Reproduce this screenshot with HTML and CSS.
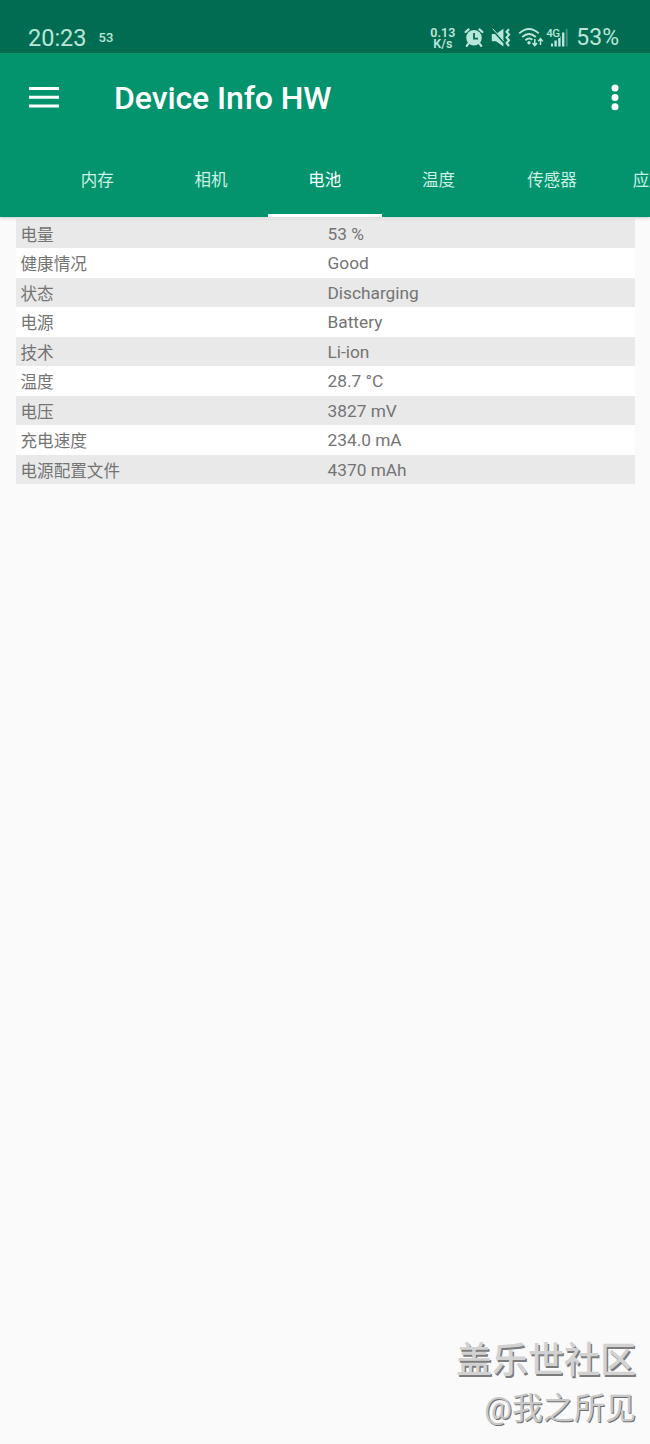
FILE: index.html
```html
<!DOCTYPE html>
<html lang="zh">
<head>
  <meta charset="UTF-8">
  <meta name="viewport" content="width=device-width, initial-scale=1.0">
  <title>Device Info HW</title>
  <link rel="stylesheet" href="styles.css">
</head>
<body>
  <div class="status-bar">
    <span class="clock">20:23</span>
    <span class="notice">53</span>
    <div class="status-icons">
      <div class="net-speed"><span>0.13</span><span>K/s</span></div>
      <!-- alarm -->
      <svg class="icon-alarm" width="20" height="20" viewBox="0 0 20 20">
        <circle cx="10" cy="9.8" r="7.8" fill="currentColor"/>
        <path d="M1.6 4L4.6 1.4M18.4 4L15.4 1.4M4.6 15.4L2.8 17.8M15.4 15.4L17.2 17.8" stroke="currentColor" stroke-width="2.2" fill="none" stroke-linecap="round"/>
        <path d="M10 5V10.6H14" stroke="#026c52" stroke-width="1.8" fill="none"/>
      </svg>
      <!-- vibrate -->
      <svg class="icon-mute" width="20" height="20" viewBox="0 0 20 20">
        <path d="M0.8 6H5L12.4 0.8V18.6L5 13.2H0.8Z" fill="currentColor"/>
        <path d="M0.6 0.6L13 14.6" stroke="#026c52" stroke-width="2"/>
        <path d="M1.8 0.8L13 13.4" stroke="currentColor" stroke-width="1"/>
        <path d="M18 1.2L15.6 3.8L18 6.6L15.6 9.4L18 12.2L15.6 15L18 18" stroke="currentColor" stroke-width="2.1" fill="none"/>
      </svg>
      <!-- wifi -->
      <svg class="icon-wifi" width="26" height="21" viewBox="0 0 26 21">
        <path d="M1.2 6.4Q11 -2.6 20.8 6.4M4.2 10Q11 3.8 17.8 10M7.4 13.2Q11 10 14.4 12.8" stroke="currentColor" stroke-width="1.9" fill="none"/>
        <circle cx="11" cy="15.8" r="1.7" fill="currentColor"/>
        <path d="M16.8 12V18M14.5 16L16.8 18.6L19.1 16M22.5 18V12M20.2 14.2L22.5 11.6L24.8 14.2" stroke="currentColor" stroke-width="1.5" fill="none"/>
      </svg>
      <div class="signal">
        <span class="signal-type">4G</span>
        <svg width="22" height="20" viewBox="0 0 22 20">
          <path d="M5 15.6H7V18.5H5ZM8.4 12.6H10.8V18.5H8.4ZM12.2 8.5H14.6V18.5H12.2ZM16 4.6H18.4V18.5H16Z" fill="currentColor"/>
          <path d="M19.8 1H21.6V18.5H19.8Z" fill="currentColor" opacity=".35"/>
        </svg>
      </div>
    </div>
    <span class="battery">53%</span>
  </div>

  <div class="app-bar">
    <div class="toolbar">
      <svg class="menu-button" width="30" height="22" viewBox="0 0 30 22">
        <path d="M0 1.5H30M0 10.3H30M0 19H30" stroke="currentColor" stroke-width="3"/>
      </svg>
      <h1>Device Info HW</h1>
      <svg class="more-button" width="8" height="28" viewBox="0 0 8 28">
        <circle cx="4" cy="4" r="3.5" fill="currentColor"/>
        <circle cx="4" cy="13.4" r="3.5" fill="currentColor"/>
        <circle cx="4" cy="22.8" r="3.5" fill="currentColor"/>
      </svg>
    </div>
    <div class="tabs">
      <div class="tab">内存</div>
      <div class="tab">相机</div>
      <div class="tab active">电池</div>
      <div class="tab">温度</div>
      <div class="tab">传感器</div>
      <div class="tab">应用程序</div>
    </div>
  </div>

  <div class="info-list">
    <div class="row"><span>电量</span><span>53 %</span></div>
    <div class="row"><span>健康情况</span><span>Good</span></div>
    <div class="row"><span>状态</span><span>Discharging</span></div>
    <div class="row"><span>电源</span><span>Battery</span></div>
    <div class="row"><span>技术</span><span>Li-ion</span></div>
    <div class="row"><span>温度</span><span>28.7 °C</span></div>
    <div class="row"><span>电压</span><span>3827 mV</span></div>
    <div class="row"><span>充电速度</span><span>234.0 mA</span></div>
    <div class="row"><span>电源配置文件</span><span>4370 mAh</span></div>
  </div>

  <div class="watermark">
    <div class="watermark-site">盖乐世社区</div>
    <div class="watermark-user">@我之所见</div>
  </div>
</body>
</html>
```

FILE: styles.css
```css
* {
  box-sizing: border-box;
}
body {
  font-family: Roboto, "Noto Sans CJK SC", sans-serif;
  background: #fafafa;
  margin: 0;
  height: 1444px;
  color: #747474;
  overflow: hidden;
  display: flex;
  flex-direction: column;
}
.status-bar {
  height: 53px;
  flex: none;
  background: #026c52;
  color: #b9e6d9;
  display: flex;
  align-items: center;
  padding: 22px 31px 0 28px;
}
.clock {
  font-size: 23.5px;
}
.notice {
  font-size: 13px;
  font-weight: 500;
  margin-left: 12px;
}
.status-icons {
  display: flex;
  align-items: center;
  margin-left: auto;
}
.net-speed {
  display: flex;
  flex-direction: column;
  align-items: center;
  font-size: 12.5px;
  line-height: 11px;
  font-weight: 600;
}
.icon-alarm {
  margin-left: 9px;
}
.icon-mute {
  margin-left: 7px;
}
.icon-wifi {
  margin-left: 7px;
}
.signal {
  position: relative;
  margin-left: 2px;
  height: 20px;
}
.signal svg {
  display: block;
}
.signal-type {
  position: absolute;
  left: 0;
  top: 0;
  font-size: 11.5px;
  line-height: 10px;
  font-weight: 500;
  letter-spacing: -0.5px;
  background: #026c52;
}
.battery {
  font-size: 23px;
  line-height: 28px;
  padding-top: 1px;
  margin-left: 8px;
}
.app-bar {
  height: 164px;
  flex: none;
  background: #03946d;
  color: #fff;
  box-shadow: 0 1px 3px rgba(0, 0, 0, 0.2);
  position: relative;
}
.toolbar {
  height: 90px;
  display: flex;
  align-items: center;
  padding: 0 31px 0 29px;
}
.toolbar h1 {
  margin: 0 auto 0 55px;
  font-size: 32px;
  font-weight: 500;
  letter-spacing: -0.1px;
}
.tabs {
  height: 74px;
  display: flex;
  padding-left: 40.5px;
  overflow: hidden;
}
.tab {
  flex: 0 0 113.7px;
  display: flex;
  align-items: center;
  justify-content: center;
  font-size: 16.5px;
  color: #cdf0e5;
  border-bottom: 3px solid transparent;
}
.tab.active {
  color: #fff;
  border-bottom-color: #fff;
}
.info-list {
  margin: 2px 15.5px 0;
}
.row {
  display: flex;
  height: 29.45px;
  line-height: 31px;
  font-size: 16.6px;
  padding-left: 5px;
  background: #fff;
}
.row:nth-child(odd) {
  background: #e9e9e9;
}
.row span:first-child {
  width: 307px;
  line-height: 33px;
}
.row span:last-child {
  font-size: 17.3px;
}
.watermark {
  margin: auto 14px 12px auto;
  text-align: right;
  color: #d2d2d2;
  text-shadow: 1.5px 1.5px 0 #7c7c7c;
}
.watermark-site {
  font-size: 36px;
  font-weight: 500;
  line-height: 50px;
}
.watermark-user {
  font-size: 31px;
  line-height: 46px;
  color: #c8c8c8;
  text-shadow: 1px 1px 0 #6e6e6e;
}
```
